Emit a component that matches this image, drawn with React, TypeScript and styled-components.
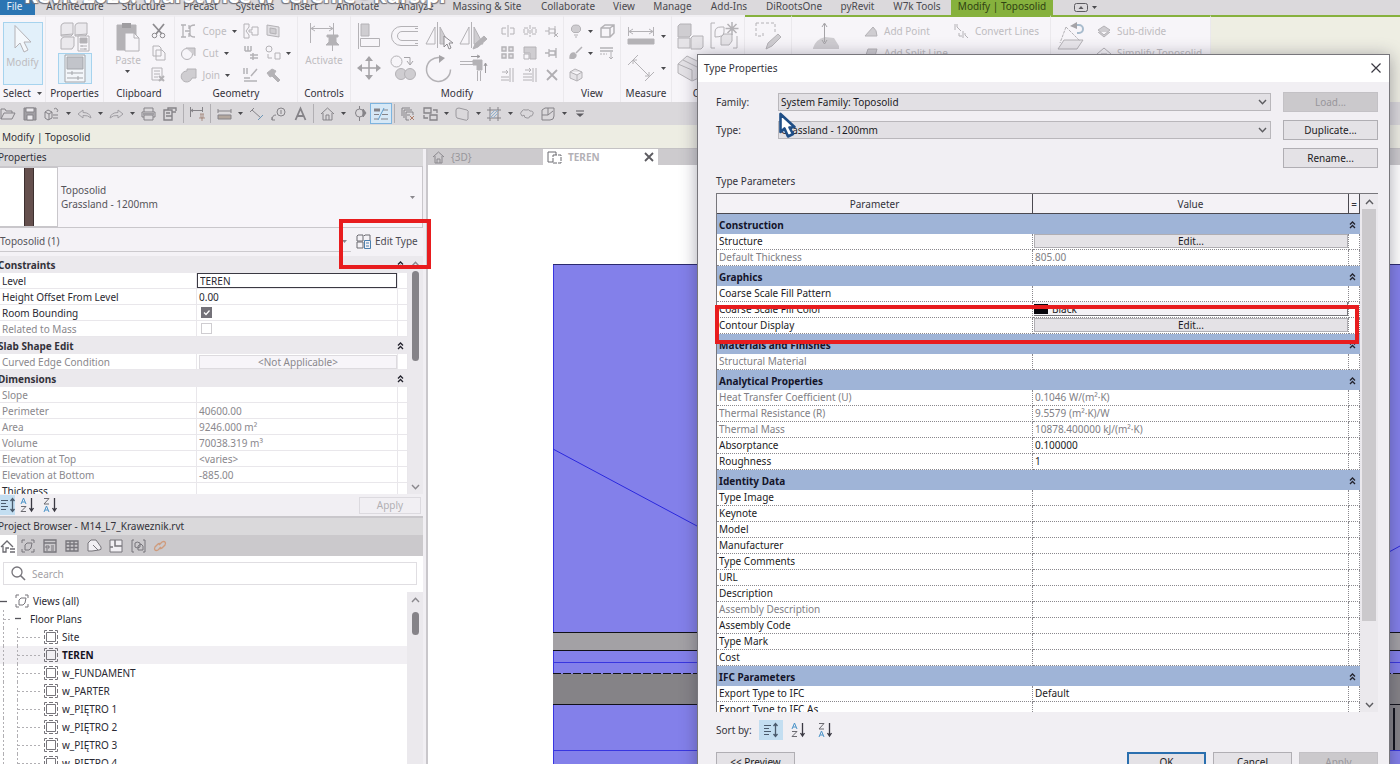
import React, { ReactNode } from "react";
import styled, { createGlobalStyle, css } from "styled-components";

const GlobalStyle = createGlobalStyle`
  * { box-sizing: border-box; }
  html, body { margin: 0; padding: 0; overflow: hidden; background: #fff; }
  body, button, input, select, table {
    font-family: "Noto Sans", "Open Sans", sans-serif;
    font-size: 10px;
    line-height: 16px;
    color: #33323a;
  }
  button, input, select { margin: 0; padding: 0; border: 0; background: none; border-radius: 0; }
  svg { display: block; flex: none; overflow: visible; }
`;

const Page = styled.div`
  position: relative;
  display: flex;
  flex-direction: column;
  height: 100vh;
  overflow: hidden;
  background: #fff;
`;

/* ---------- icons ---------- */

type DrawProps = { w: number; h: number; tone?: string; children: ReactNode };

const Drawing = ({ w, h, tone = "#b4b2b6", children }: DrawProps) => (
  <svg width={w} height={h} viewBox={`0 0 ${w} ${h}`} fill="none" stroke={tone} strokeWidth="1" aria-hidden="true">
    {children}
  </svg>
);

const Caret = ({ tone = "#4a4a4e" }: { tone?: string }) => (
  <svg width="5" height="3" viewBox="0 0 5 3" aria-hidden="true"><path d="M0 0h5L2.500 3z" fill={tone} /></svg>
);

const Chevrons = () => (
  <svg width="7" height="8" viewBox="0 0 7 8" fill="none" stroke="#22222c" strokeWidth="1.300" aria-hidden="true">
    <path d="M1 3.500L3.500 1 6 3.500M1 7L3.500 4.500 6 7" />
  </svg>
);

const Chevron = ({ up, tone = "#5c5c60" }: { up?: boolean; tone?: string }) => (
  <svg width="9" height="6" viewBox="0 0 9 6" fill="none" stroke={tone} strokeWidth="1.400" aria-hidden="true">
    <path d={up ? "M1 5L4.500 1.200 8 5" : "M1 1L4.500 4.800 8 1"} />
  </svg>
);

const G = "#b4b2b6";
const F = "#cfcdd1";

const big = {
  arrow: <Drawing w={20} h={30}><path d="M2 1.500V24l5-5 4 9 4-2-4-8h7z" fill="#f4f8fc" /></Drawing>,
  types: (
    <Drawing w={30} h={30}>
      <path d="M1 4q0-2 3-3h9v11l-2 2H1zM15 4q0-2 3-3h9v11l-2 2H15zM1 18q0-2 3-3h10v9l-2 3H1zM1 13l12-1M15 13l12-1" fill="#ebe9ed" />
      <path d="M18 14h11v15H18z" fill="#f7f5f9" /><path d="M20 16h7v5h-7z" fill={G} /><path d="M20 24h7M20 27h7M22 23v2M25 26v2" />
    </Drawing>
  ),
  palette: (
    <Drawing w={22} h={29} tone="#a3a5aa">
      <path d="M1 1h20v27H1z" fill="#f3f6fa" /><path d="M3 3h16v12H3z" fill="#c2c4ca" />
      <path d="M3 19h16M3 24h16M8 17v4M14 22v4" />
    </Drawing>
  ),
  paste: (
    <Drawing w={24} h={30}>
      <path d="M1 3h19v25H1z" fill={G} /><path d="M6 1h9v5H6z" fill="#9f9da1" stroke="none" />
      <path d="M9 11h9l5 5v13H9z" fill="#f7f5f9" /><path d="M18 11v5h5" />
    </Drawing>
  ),
  activate: (
    <Drawing w={30} h={30}>
      <path d="M1.500 1v20M24.500 1v12M2 6.500h22M6 4L2 6.500 6 9M20 4l4 2.500L20 9" />
      <path d="M18 13h11v2h-2v5l3 3H17l3-3v-5h-2zM23.500 23v6" fill={G} />
    </Drawing>
  ),
  align: <Drawing w={24} h={26}><path d="M1.500 0v26" /><path d="M4 1h8v12H4z" fill={F} /><path d="M3.500 15.500h19v8h-19z" /></Drawing>,
  offset: <Drawing w={30} h={24}><path d="M29 2.500H12a9.500 9.500 0 0 0 0 19h17M29 7.500H13a4.500 4.500 0 0 0 0 9h16M29 4.500h-3M29 19.500h-3" /></Drawing>,
  mirror: (
    <Drawing w={28} h={28}>
      <path d="M12.500 0v26" /><path d="M10 5v17H1z" /><path d="M15 5v17h9z" fill={F} />
      <path d="M19 14v11l3-3 2 5 2-1-2-5h4z" fill="#f7f5f9" stroke="#8e8c90" />
    </Drawing>
  ),
  mirrorDraw: (
    <Drawing w={30} h={28}>
      <path d="M12.500 0v26" /><path d="M10 5v17H1z" /><path d="M15 5v17h9z" fill={F} />
      <path d="M14 27l2-5 9-8 3 3-9 8z" fill={G} />
    </Drawing>
  ),
  move: (
    <Drawing w={24} h={24} tone="#a5a3a7">
      <path d="M12 3v18M3 12h18" strokeWidth="1.500" />
      <path d="M12 0l4 5H8zM12 24l4-5H8zM0 12l5-4v8zM24 12l-5-4v8z" fill="#a5a3a7" stroke="none" />
    </Drawing>
  ),
  copy: (
    <Drawing w={28} h={26}>
      <circle cx="6.500" cy="6.500" r="5.500" /><path d="M14 2.500h6v7M17 6l3 4 3-4" stroke="#a5a3a7" />
      <circle cx="11" cy="19" r="5.500" fill={F} /><circle cx="20" cy="19" r="5.500" fill={F} />
    </Drawing>
  ),
  rotate: <Drawing w={28} h={27}><path d="M15 2.500a12 12 0 1 0 10.500 12" strokeWidth="1.500" /><path d="M14 0l6 3-6 5z" fill="#a5a3a7" stroke="none" /></Drawing>,
  trim: (
    <Drawing w={28} h={27}>
      <path d="M0 6.500h13M0 9.500h13M17.500 16v10M20.500 16v10" /><path d="M13 5h9v10h-5v-5h-4z" fill={G} />
      <path d="M11 1.500h8M17 0l3 1.500L17 3M25.500 18V9M24 11l1.500-3L27 11" stroke="#9a989c" />
    </Drawing>
  ),
  ruler: <Drawing w={28} h={18}><path d="M1.500 0v9M26.500 0v9M2 4.500h24M6 2L2 4.500 6 7M22 2l4 2.500L22 7" /><path d="M1 12h26v5H1z" fill={G} /></Drawing>,
  dimension: <Drawing w={28} h={28}><path d="M1 11L11 1M18 27l9-9M6 6l16 16M6 10V6h4M22 18v4h-4" /></Drawing>,
  blocks: <Drawing w={27} h={27}><path d="M1 3l2-2h11v11l-2 2H1z" fill={F} /><path d="M1 15h12v10H1zM14 15l2-2h10v11l-2 2H14z" fill="#e5e3e7" /></Drawing>,
  bricks: <Drawing w={24} h={26}><path d="M1 9l9-8 14 7v14l-9 4L1 18zM1 9l14 6v10M6 5l14 7" fill="#e5e3e7" /></Drawing>,
  group: (
    <Drawing w={30} h={28}>
      <path d="M5 1H1v25h4M23 26h4V14" /><path d="M5 10q0-5 6-5h3v5q0 5-9 5z" /><path d="M11 15l3-3h8v7l-3 4h-8z" fill="#e5e3e7" />
      <path d="M22 0v13M15.500 6.500h13M17.500 2l9 9M26.500 2l-9 9" strokeWidth="1.500" />
    </Drawing>
  ),
  boundary: <Drawing w={27} h={28}><path d="M1 1h19v9M1 1v13h7v-4" strokeDasharray="3 2" /><path d="M11 27l2-6 10-9 3 3-9 9z" fill={F} /></Drawing>,
  shape: <Drawing w={28} h={28}><path d="M1 26q3-9 12-11l9 1 5 8v3H1z" fill={F} stroke="none" /><path d="M12.500 2v18M10 5l2.500-4L15 5M10 18l2.500 4 2.500-4" stroke="#a5a3a7" /></Drawing>,
  reset: (
    <Drawing w={29} h={28}>
      <path d="M7 18h19l-6 9H1z" fill="#e9e7eb" /><path d="M9 5L3 21M9 5l14 14" strokeDasharray="3 1" /><path d="M19 3h3a4 4 0 0 1 0 8h-2" stroke="#a8bccd" strokeWidth="2" />
      <path d="M20 0v7l-7-3z" fill="#a5a3a7" stroke="none" />
    </Drawing>
  ),
};

const small = {
  cut: <Drawing w={16} h={16} tone="#8e8c90"><path d="M2 1l9 10M13 1L5 11" strokeWidth="1.800" /><circle cx="3.500" cy="12.500" r="2.300" /><circle cx="11.500" cy="12.500" r="2.300" /></Drawing>,
  pages: <Drawing w={16} h={16}><path d="M2 1h6l2 2v8H2zM5 5h6l3 3v7H5z" fill="#f7f5f9" /></Drawing>,
  match: <Drawing w={16} h={16}><path d="M1 1h10v12H1zM3 4h6M3 7h6M3 10h4" /><path d="M8 9l5 5M13 9l-5 5" strokeWidth="2" /></Drawing>,
  cope: <Drawing w={16} h={16}><path d="M2 2v12M0 2h5M0 14h5M4 8h5M14 2q-5 0-5 3v6q0 3 5 3M8 2v4M8 10v4" strokeWidth="1.300" /></Drawing>,
  cutGeo: <Drawing w={16} h={16}><circle cx="6" cy="9" r="5.500" /><path d="M5 3h9v8" fill={F} /></Drawing>,
  join: <Drawing w={16} h={16}><path d="M6 2h9v9h-4a5.500 5.500 0 1 1-5-7z" fill={F} /></Drawing>,
  shrink: <Drawing w={16} h={16}><path d="M1 1h5v3L3 8l3 4v3H1zM9 4h6v8H9v-3H6V7h3z" /></Drawing>,
  wall: <Drawing w={16} h={16}><path d="M2 2l12 2v10L2 12z" fill="#e1dfe3" /><path d="M5 5l6 1v5L5 10z" fill={F} /></Drawing>,
  beam: <Drawing w={16} h={16}><path d="M2 1v5M5 1v5M8 1v5M2 6h6M7 10h8M7 13h8M10 8v7" strokeWidth="1.500" /></Drawing>,
  paint: <Drawing w={16} h={16}><circle cx="4" cy="4" r="3" /><path d="M3 9v4h4M10 8h5v6h-5z" /></Drawing>,
  demolish: <Drawing w={16} h={16}><path d="M1 1v6M4 1v6M1 14h13M1 11h6M8 9l6-7" strokeWidth="1.500" /></Drawing>,
  hammer: <Drawing w={16} h={16}><path d="M2 6l5-4 4 2-2 3 6 6-2 2-6-6-2 1z" fill={G} /></Drawing>,
  split: <Drawing w={14} h={12}><path d="M5 3H1v6h4M9 3h4v6H9M7 0v12" /></Drawing>,
  splitGap: <Drawing w={14} h={12}><path d="M5 3H1v6h4zM9 3h4v6H9zM7 0v12" strokeDasharray="4 1" /></Drawing>,
  unpin: <Drawing w={14} h={12}><path d="M0 6h4M4 2v8M4 4h6v4H4M10 1v10M9 8l4 4M13 8l-4 4" /></Drawing>,
  array: <Drawing w={14} h={14}><path d="M1 1h4v4H1zM8 1h4v4H8zM1 8h4v4H1zM8 8h4v4H8z" fill="#e1dfe3" strokeWidth="1.400" /></Drawing>,
  scale: <Drawing w={14} h={14}><path d="M1 1h12v12H7V7H1z" fill={F} /><path d="M1 8h5v5H1z" /></Drawing>,
  pin: <Drawing w={14} h={12}><path d="M0 6h4M4 2v8M4 4h6v4H4M11 1v10" strokeWidth="1.300" /></Drawing>,
  trimOne: <Drawing w={14} h={14}><path d="M12 0v14M9 0v14M0 9h8M0 12h8M1 4h6M5 2l2 2-2 2" /></Drawing>,
  trimMany: <Drawing w={14} h={14}><path d="M13 0v14M10 0v14M0 6h9M0 9h9M0 12h9M2 2h6M6 0l2 2-2 2" /></Drawing>,
  erase: <Drawing w={14} h={14} tone="#b0aeb2"><path d="M2 2l10 10M12 2L2 12" strokeWidth="1.800" /></Drawing>,
  bulb: <Drawing w={14} h={14}><path d="M7 1a4 4 0 0 1 2.500 7.500H4.500A4 4 0 0 1 7 1z" fill={F} /><path d="M5 11h4M6 13h2" /></Drawing>,
  cube: <Drawing w={16} h={16}><path d="M2 5l4-3h9v8l-4 4H2zM2 5h9v9M11 5l4-3" strokeWidth="1.500" /></Drawing>,
  brush: <Drawing w={14} h={14}><path d="M1 12q0-5 4-5l2 2q0 4-6 3zM7 7l6-6" fill={G} strokeWidth="1.500" /></Drawing>,
  lines: <Drawing w={16} h={14}><path d="M1 2h13M1 5h13" strokeWidth="1.500" /><path d="M1 8h7" strokeDasharray="2 1" /><path d="M12 6v7M10 11l2 2 2-2" /></Drawing>,
  box: <Drawing w={14} h={14}><path d="M1 4l5-3 7 3v6l-5 3-7-3zM1 4l7 3 5-3M8 7v6" fill="#e5e3e7" /></Drawing>,
  point: <Drawing w={16} h={14}><path d="M2 12h12q0-6-4-9z" fill={F} /></Drawing>,
  splitLine: <Drawing w={16} h={14}><path d="M2 12l3-9h9l-2 7-3 2z" fill={F} /></Drawing>,
  convert: <Drawing w={16} h={16}><path d="M1 1v6M3 1v3l4 4M5 10v3h3M9 8v7M11 10v2l3 3" /></Drawing>,
  subdivide: <Drawing w={16} h={14}><path d="M2 6l6-4 6 4-6 5zM2 8l6 5 6-5" fill={F} /></Drawing>,
  simplify: <Drawing w={16} h={14}><path d="M1 8l7-6 7 6-7 5zM5 8h6" /></Drawing>,
};

const Q = "#858388";
const quick: Record<string, ReactNode> = {
  open: <Drawing w={16} h={14} tone={Q}><path d="M1 12V2h4l1 2h6v2M1 12l3-6h11l-3 6z" /></Drawing>,
  save: <Drawing w={14} h={14} tone={Q}><path d="M1 1h12v12H1z" fill="#a09ea3" /><path d="M3 1h8v4H3zM4 8h6v5H4z" fill="#ebe9ed" /></Drawing>,
  sync: <Drawing w={16} h={14} tone={Q}><path d="M1 5l3-2 4 2v6l-4 2-3-2zM1 5l4 2 3-2M5 7v6M10 2a2 2 0 1 1 3 3M9 8h5M9 11h5" /></Drawing>,
  undo: <Drawing w={15} h={12} tone="#a19fa4"><path d="M1 6l5-4v2.500q7 0 8 5.500-3-3-8-2.500V10z" /></Drawing>,
  redo: <Drawing w={15} h={12} tone="#a19fa4"><path d="M14 6L9 2v2.500Q2 4.500 1 10q3-3 8-2.500V10z" /></Drawing>,
  print: <Drawing w={15} h={14} tone={Q}><path d="M3 5V1h9v4M3 10H1V5h13v5h-2M3 8h9v5H3z" /><path d="M2 6h11v2H2z" fill="#a09ea3" stroke="none" /></Drawing>,
  sheet: <Drawing w={14} h={14} tone={Q}><path d="M1 3h8v10H1zM3 6h4M3 9h6M5 3V1h8v3M9 5h4" strokeWidth="1.400" /></Drawing>,
  aligned: <Drawing w={16} h={14} tone={Q}><path d="M1.500 0v10M13.500 0v5M2 3.500h11M4 2L2 3.500 4 5" /><path d="M11 7h4M12 7v4h2V7M10 11h6M13 11v3" stroke="#a98f85" /></Drawing>,
  measure: <Drawing w={15} h={12} tone={Q}><path d="M1 1v4M14 1v4M1 3h13" /><path d="M1 7h13v4H1z" fill="#b3a79e" /></Drawing>,
  slope: <Drawing w={15} h={14} tone={Q}><path d="M1 5l4-4M3 3l9 8" /><path d="M9 13l5-5" stroke="#6d97b8" /></Drawing>,
  tag: <Drawing w={15} h={14} tone={Q}><circle cx="10" cy="5" r="4" /><path d="M10 3v4M1 13q0-5 4-5M1 10v3h3" /></Drawing>,
  text: <Drawing w={13} h={14} tone={Q}><path d="M1.500 13L6.500 1.500 11.500 13M3.500 9h6" strokeWidth="1.800" /></Drawing>,
  home: <Drawing w={15} h={14} tone={Q}><path d="M1 7l6.500-6L14 7M3 6v7h9V6M6 13V8h3v5" /></Drawing>,
  section: <Drawing w={13} h={15} tone={Q}><circle cx="6.500" cy="7" r="4" /><path d="M6.500 0v3M6.500 11v4" /><path d="M10 3l3 4-3 4z" fill={Q} /></Drawing>,
  thin: <Drawing w={16} h={14} tone={Q}><path d="M1 3h6" strokeWidth="3" /><path d="M10 3h5M1 7.500h5M9 7.500h6M1 12h4M8 12h7" /><path d="M5 13L11 1" stroke="#5f9bc9" /></Drawing>,
  close: <Drawing w={14} h={14} tone={Q}><path d="M1 9V1h8M3 11V3h8M5 5h7v3M5 5v8h3M6 8h3" /><path d="M9 9l4 4M13 9l-4 4" stroke="#b07f6b" /></Drawing>,
  swap: <Drawing w={15} h={14} tone={Q}><path d="M1 1h7v5H1zM7 8h7v5H7zM10 3h4v3M5 11H1V8" strokeWidth="1.300" /></Drawing>,
  solid: <Drawing w={15} h={14} tone="#9a989d"><path d="M1 3q0-2 3-2l8 2q2 1 1 3v6q-1 2-3 1l-8-2q-1-1-1-3z" /></Drawing>,
  hatch: <Drawing w={14} h={14} tone={Q}><path d="M3 0v14M11 0v14M0 3h14M0 11h14" /><path d="M3 8l5-5M3 11l8-8M6 11l5-5" stroke="#8fb2d0" /></Drawing>,
  cloud: <Drawing w={15} h={12} tone="#9a989d"><path d="M3 8q-3-3 0-5 1-2 4-1 3-1 4 1 4 0 3 3-1 3-3 2-1 3-3 2-3 0-3-3-1 1-2 1z" /></Drawing>,
  cubeBox: <Drawing w={14} h={14} tone={Q}><path d="M1 3l3-2h9v8q0 4-4 4H1zM1 8h6V1M7 8l5-4" /></Drawing>,
  more: <Drawing w={8} h={7} tone="#5c5b60"><path d="M0 1h8" /><path d="M0 3.500h8L4 7z" fill="#5c5b60" stroke="none" /></Drawing>,
};

/* ---------- tab strip ---------- */

const TabStrip = styled.nav`
  display: flex;
  flex: none;
  height: 15px;
  background: #dbd9dc;
  overflow: hidden;
`;

const RibbonTab = styled.a<{ $w: number; $kind?: "file" | "context" }>`
  flex: none;
  width: ${(p) => p.$w}px;
  height: 15px;
  line-height: 12px;
  text-align: center;
  white-space: nowrap;
  color: #4a494e;
  text-decoration: none;
  ${(p) => p.$kind === "file" && css`background: #2b75b3; color: #e6f0f8; padding-right: 6px;`}
  ${(p) => p.$kind === "context" && css`background: #86b13d; color: #2f4213;`}
`;

const StripEnd = styled.div`
  display: flex;
  gap: 4px;
  align-items: center;
  padding-left: 21px;
`;

const Caption = styled.div`
  position: absolute;
  top: -15px;
  left: 24px;
  font-size: 21px;
  font-weight: 700;
  line-height: 20px;
  white-space: nowrap;
  color: #fff;
  text-shadow: 1px 1px 1px #77757b, -1px 1px 1px #77757b;
  pointer-events: none;
`;

const tabs: [string, number, ("file" | "context")?][] = [
  ["File", 35, "file"], ["Architecture", 80], ["Structure", 57], ["Precast", 57], ["Systems", 52], ["Insert", 46],
  ["Annotate", 61], ["Analyze", 55], ["Massing & Site", 88], ["Collaborate", 74], ["View", 38], ["Manage", 59],
  ["Add-Ins", 54], ["DiRootsOne", 76], ["pyRevit", 51], ["W7k Tools", 68], ["Modify | Toposolid", 102, "context"],
];

/* ---------- ribbon ---------- */

const Ribbon = styled.div`
  display: flex;
  flex: none;
  height: 87px;
  background: #eeeee3;
  overflow: hidden;
`;

const Panel = styled.section<{ $w: number; $context?: boolean }>`
  display: flex;
  flex-direction: column;
  flex: none;
  width: ${(p) => p.$w}px;
  padding-top: 5px;
  background: #f7f5f9;
  border-right: 1px solid #ebe9ed;
  border-top: 2px solid ${(p) => (p.$context ? "#86b13d" : "#f1eff3")};
`;

const ContextFill = styled.div`
  flex: 1;
  border-top: 2px solid #86b13d;
`;

const PanelBody = styled.div<{ $lead?: number }>`
  display: flex;
  flex: 1;
  min-height: 0;
  justify-content: ${(p) => (p.$lead ? "flex-start" : "center")};
  gap: 6px;
  padding-left: ${(p) => p.$lead ?? 0}px;
  white-space: nowrap;
`;

const PanelTitle = styled.div`
  display: flex;
  flex: none;
  align-items: center;
  justify-content: center;
  gap: 6px;
  height: 18px;
`;

const Tool = styled.button<{ $active?: boolean; $w?: number }>`
  display: flex;
  flex-direction: column;
  align-items: center;
  width: ${(p) => (p.$w ? p.$w + "px" : "auto")};
  height: 63px;
  color: #bebcc0;
  ${(p) => p.$active && css`background: #e2f0fa; outline: 1px solid #a6d3ee; outline-offset: -1px; padding-top: 2px;`}
`;

const SmallActive = styled.span`
  display: flex;
  justify-content: center;
  width: 34px;
  height: 31px;
  margin-top: 1px;
  background: #e2f0fa;
  border: 1px solid #a6d3ee;
`;

const ToolLabel = styled.span`
  display: flex;
  flex-direction: column;
  align-items: center;
  gap: 2px;
`;

const Column = styled.div<{ $gap?: number; $lead?: number }>`
  display: flex;
  flex-direction: column;
  gap: ${(p) => p.$gap ?? 0}px;
  padding-left: ${(p) => p.$lead ?? 0}px;
`;

const ToolRow = styled.button`
  display: flex;
  flex: none;
  align-items: center;
  gap: 5px;
  height: 22px;
  padding-bottom: 4px;
  color: #bebcc0;
`;

const BigGrid = styled.div`
  display: grid;
  grid-template-columns: repeat(4, 35px);
  grid-auto-rows: 32px;
  justify-items: center;
`;

const SmallGrid = styled.div`
  display: grid;
  grid-template-columns: repeat(3, 22px);
  grid-auto-rows: 22px;
  justify-items: center;
  align-items: start;
`;

const Slot = styled.button<{ $h?: number }>`
  display: flex;
  flex: none;
  align-items: center;
  gap: 6px;
  height: ${(p) => p.$h ?? 18}px;
`;

const SlotRow = ({ icon, label, caret }: { icon: ReactNode; label?: string; caret?: boolean }) => (
  <ToolRow>{icon}{label && <span>{label}</span>}{caret && <Caret />}</ToolRow>
);

const RibbonArea = () => (
  <Ribbon>
    <Panel $w={46}>
      <PanelBody><Tool $active $w={40}>{big.arrow}<ToolLabel>Modify</ToolLabel></Tool></PanelBody>
      <PanelTitle>Select <Caret /></PanelTitle>
    </Panel>
    <Panel $w={58}>
      <PanelBody><Tool>{big.types}<SmallActive>{big.palette}</SmallActive></Tool></PanelBody>
      <PanelTitle>Properties</PanelTitle>
    </Panel>
    <Panel $w={71}>
      <PanelBody>
        <Tool $w={34}>{big.paste}<ToolLabel>Paste<Caret /></ToolLabel></Tool>
        <Column><SlotRow icon={small.cut} /><SlotRow icon={small.pages} /><SlotRow icon={small.match} /></Column>
      </PanelBody>
      <PanelTitle>Clipboard</PanelTitle>
    </Panel>
    <Panel $w={123}>
      <PanelBody>
        <Column>
          <SlotRow icon={small.cope} label="Cope" caret />
          <SlotRow icon={small.cutGeo} label="Cut" caret />
          <SlotRow icon={small.join} label="Join" caret />
        </Column>
        <Column><SlotRow icon={small.shrink} /><SlotRow icon={small.beam} /><SlotRow icon={small.demolish} /></Column>
        <Column><SlotRow icon={small.wall} /><SlotRow icon={small.paint} caret /><SlotRow icon={small.hammer} /></Column>
      </PanelBody>
      <PanelTitle>Geometry</PanelTitle>
    </Panel>
    <Panel $w={53}>
      <PanelBody><Tool>{big.activate}<ToolLabel>Activate</ToolLabel></Tool></PanelBody>
      <PanelTitle>Controls</PanelTitle>
    </Panel>
    <Panel $w={213}>
      <PanelBody>
        <BigGrid>
          {[big.align, big.offset, big.mirror, big.mirrorDraw, big.move, big.copy, big.rotate, big.trim].map((g, i) => (
            <Slot key={i} $h={28}>{g}</Slot>
          ))}
        </BigGrid>
        <SmallGrid>
          {[small.split, small.splitGap, small.unpin, small.array, small.scale, small.pin, small.trimOne, small.trimMany, small.erase].map((g, i) => (
            <Slot key={i}>{g}</Slot>
          ))}
        </SmallGrid>
      </PanelBody>
      <PanelTitle>Modify</PanelTitle>
    </Panel>
    <Panel $w={57}>
      <PanelBody>
        <Column><SlotRow icon={small.bulb} caret /><SlotRow icon={small.brush} caret /><SlotRow icon={small.box} /></Column>
        <Column><SlotRow icon={small.cube} /><SlotRow icon={small.lines} /></Column>
      </PanelBody>
      <PanelTitle>View</PanelTitle>
    </Panel>
    <Panel $w={51}>
      <PanelBody>
        <Column $gap={4}><Slot $h={28}>{big.ruler}<Caret /></Slot><Slot $h={28}>{big.dimension}<Caret /></Slot></Column>
      </PanelBody>
      <PanelTitle>Measure</PanelTitle>
    </Panel>
    <Panel $w={73}>
      <PanelBody>
        <Column $gap={4}><Slot $h={28}>{big.blocks}</Slot><Slot $h={28}>{big.bricks}</Slot></Column>
        <Column><Slot $h={28}>{big.group}</Slot></Column>
      </PanelBody>
      <PanelTitle>Create</PanelTitle>
    </Panel>
    <Panel $w={47} $context>
      <PanelBody><Slot $h={28}>{big.boundary}</Slot></PanelBody>
    </Panel>
    <Panel $w={259} $context>
      <PanelBody $lead={20}>
        <Slot $h={28}>{big.shape}</Slot>
        <Column $lead={17}><SlotRow icon={small.point} label="Add Point" /><SlotRow icon={small.splitLine} label="Add Split Line" /></Column>
        <Column><SlotRow icon={small.convert} label="Convert Lines" /></Column>
      </PanelBody>
    </Panel>
    <Panel $w={160} $context>
      <PanelBody $lead={6}>
        <Slot $h={28}>{big.reset}</Slot>
        <Column $lead={4}><SlotRow icon={small.subdivide} label="Sub-divide" /><SlotRow icon={small.simplify} label="Simplify Toposolid" /></Column>
      </PanelBody>
    </Panel>
    <ContextFill />
  </Ribbon>
);

/* ---------- quick access and options bars ---------- */

const QuickBar = styled.div`
  display: flex;
  flex: none;
  align-items: center;
  height: 23px;
  margin-left: -3px;
  background: #dad8db;
`;

const QuickButton = styled.button<{ $active?: boolean; $narrow?: boolean }>`
  display: flex;
  align-items: center;
  justify-content: center;
  flex: none;
  width: ${(p) => (p.$narrow ? 10 : 22)}px;
  height: 21px;
  ${(p) => p.$active && css`background: #d6e8f6; outline: 1px solid #7db4df; outline-offset: -1px;`}
`;

const QuickRule = styled.span`
  width: 1px;
  height: 19px;
  margin: 0 2px;
  background: #b1afb3;
`;

const quickOrder = [
  "open", "save", "sync", "v", "undo", "v", "redo", "v", "print", "sheet", "|", "aligned", "|", "measure", "v", "slope", "tag",
  "text", "|", "home", "v", "section", "thin", "|", "close", "swap", "v", "solid", "v", "hatch", "v", "cloud", "cubeBox", "v", "more",
];

const OptionsBar = styled.div`
  flex: none;
  height: 24px;
  padding: 0 2px;
  line-height: 24px;
  background: #edede3;
  border-bottom: 1px solid #c4c2c4;
`;

/* ---------- workspace ---------- */

const Workspace = styled.div`
  display: flex;
  flex: 1;
  min-height: 0;
`;

const Sidebar = styled.aside`
  display: flex;
  flex-direction: column;
  flex: none;
  width: 428px;
  padding-right: 3px;
  background: #f1eff3;
  border-right: 2px solid #c9c7cb;
`;

const DockTitle = styled.h2`
  margin: 0;
  flex: none;
  height: 17px;
  font-size: 10px;
  font-weight: 400;
  line-height: 17px;
  text-indent: -2px;
  background: #dad9db;
`;

const TypePicker = styled.div`
  display: flex;
  flex: none;
  align-items: center;
  height: 62px;
  padding-right: 7px;
  background: #f7f5f9;
  border: 1px solid #c9c7cb;
  border-left: 0;
`;

const Thumb = styled.div`
  display: flex;
  justify-content: center;
  width: 58px;
  height: 60px;
  background: #fff;
  border: 1px solid #c9c7cb;
  border-left: 0;
  &::after { content: ""; width: 8px; background: #65504e; border: 1px solid #3d3030; border-width: 0 1px; }
`;

const TypeText = styled.div`
  flex: 1;
  padding-left: 3px;
  line-height: 14px;
  color: #55545a;
`;

const InstanceRow = styled.div`
  display: flex;
  flex: none;
  height: 28px;
  background: #f4f2f6;
`;

const InstanceSelect = styled.div`
  display: flex;
  align-items: center;
  justify-content: space-between;
  width: 351px;
  height: 24px;
  padding: 3px 4px 0 0;
  color: #55545a;
  border-bottom: 1px solid #cbc9cd;
`;

const EditTypeFrame = styled.div`
  position: relative;
  display: flex;
  flex: 1;
`;

const Highlight = styled.div<{ $t: number; $l: number; $r: number; $h: number }>`
  position: absolute;
  top: ${(p) => p.$t}px;
  left: ${(p) => p.$l}px;
  right: ${(p) => p.$r}px;
  height: ${(p) => p.$h}px;
  border: 4px solid #e81c1e;
  z-index: 2;
  pointer-events: none;
`;

const EditTypeButton = styled.button`
  display: flex;
  align-items: center;
  gap: 4px;
  height: 26px;
  padding-left: 5px;
  color: #4c4b52;
`;

const GridArea = styled.div`
  display: flex;
  flex: none;
  height: 238px;
  overflow: hidden;
`;

const PropTable = styled.table`
  flex: 1;
  table-layout: fixed;
  border-collapse: separate;
  border-spacing: 0;
  align-self: flex-start;
  background: #fff;
`;

const PropGroup = styled.th`
  height: 17px;
  padding: 0 4px 0 0;
  line-height: 16px;
  text-align: left;
  text-indent: -2px;
  font-weight: 700;
  background: #ebe9ed;
`;

const GroupLine = styled.span`
  display: flex;
  align-items: center;
  justify-content: space-between;
`;

const PropCell = styled.td<{ $dim?: boolean }>`
  height: 16px;
  padding: 0 0 0 2px;
  line-height: 14px;
  white-space: nowrap;
  color: ${(p) => (p.$dim ? "#8a888d" : "#2a2932")};
  border-bottom: 1px solid #e9e7eb;
  border-right: 1px solid #e9e7eb;
`;

const LevelInput = styled.input`
  display: block;
  width: 200px;
  height: 15px;
  margin-left: -2px;
  padding: 0 2px;
  line-height: 13px;
  color: #2a2932;
  border: 1px solid #3a3942;
`;

const Tick = styled.input`
  appearance: none;
  display: block;
  width: 11px;
  height: 11px;
  margin: 0 0 0 2px;
  border: 1px solid #cfcdd1;
  &:checked {
    border-color: #747279;
    background: #747279 url("data:image/svg+xml,%3Csvg xmlns='http://www.w3.org/2000/svg' viewBox='0 0 9 9'%3E%3Cpath d='M2 4.500l2 2 3.500-4' fill='none' stroke='white' stroke-width='1.300'/%3E%3C/svg%3E");
  }
`;

const NotApplicable = styled.button`
  display: block;
  width: 198px;
  height: 14px;
  line-height: 12px;
  color: #8a888d;
  background: #f7f5f9;
  border: 1px solid #dddbdf;
`;

const ScrollTrack = styled.div<{ $w: number }>`
  display: flex;
  flex-direction: column;
  align-items: center;
  flex: none;
  width: ${(p) => p.$w}px;
  background: #ebe9ed;
`;

const ScrollArrow = styled.button`
  display: flex;
  align-items: center;
  justify-content: center;
  flex: none;
  width: 100%;
  height: 15px;
`;

const ScrollThumb = styled.div<{ $h: number; $w: number; $tone: string; $round?: boolean }>`
  flex: none;
  width: ${(p) => p.$w}px;
  height: ${(p) => p.$h}px;
  background: ${(p) => p.$tone};
  border-radius: ${(p) => (p.$round ? 4 : 0)}px;
`;

const Spring = styled.span`
  flex: 1;
`;

const PanelFoot = styled.div`
  display: flex;
  flex: none;
  align-items: center;
  height: 24px;
  padding-right: 2px;
  border-bottom: 2px solid #c9c7cb;
`;

const SortButton = styled.button<{ $active?: boolean; $w: number }>`
  display: flex;
  align-items: center;
  justify-content: center;
  width: ${(p) => p.$w}px;
  height: 20px;
  background: ${(p) => (p.$active ? "#c3def1" : "transparent")};
`;

const PaleButton = styled.button`
  width: 62px;
  height: 17px;
  line-height: 15px;
  color: #b1afb3;
  border: 1px solid #dcdadf;
`;

const BrowserTabs = styled.div`
  display: flex;
  flex: none;
  height: 21px;
  background: #cbc9cc;
`;

const BrowserTab = styled.button<{ $active?: boolean }>`
  display: flex;
  align-items: center;
  justify-content: center;
  flex: none;
  width: ${(p) => (p.$active ? 17 : 22)}px;
  background: ${(p) => (p.$active ? "#fff" : "transparent")};
`;

const BrowserBody = styled.div`
  display: flex;
  flex-direction: column;
  flex: 1;
  min-height: 0;
  padding-top: 6px;
  background: #fff;
`;

const SearchBox = styled.label`
  display: flex;
  flex: none;
  align-items: center;
  gap: 6px;
  height: 23px;
  margin: 0 6px 7px 3px;
  padding-left: 7px;
  border: 1px solid #e0dee2;
`;

const SearchInput = styled.input`
  flex: 1;
  outline: 0;
  &::placeholder { color: #a3a1a6; opacity: 1; }
`;

const TreeArea = styled.div`
  display: flex;
  flex: 1;
  min-height: 0;
  overflow: hidden;
`;

const Tree = styled.ul`
  flex: 1;
  margin: 0;
  padding: 0;
  list-style: none;
  color: #2a2932;
`;

const TreeItem = styled.li<{ $selected?: boolean }>`
  display: flex;
  align-items: center;
  height: 18px;
  ${(p) => p.$selected && css`background: #f1eff3; font-weight: 700; color: #14131f;`}
`;

const TreeName = styled.span`
  padding-left: 4px;
`;

const ThumbGap = styled.span`
  height: 5px;
`;

/* ---------- canvas ---------- */

const CanvasArea = styled.main`
  display: flex;
  flex-direction: column;
  flex: 1;
  min-width: 0;
  background: #fff;
`;

const ViewTabs = styled.div`
  display: flex;
  flex: none;
  height: 16px;
  background: #cdcbce;
`;

const ViewTab = styled.button<{ $active?: boolean }>`
  display: flex;
  align-items: center;
  gap: 6px;
  width: 115px;
  padding: 0 4px;
  line-height: 16px;
  color: ${(p) => (p.$active ? "#b3b1b6" : "#98969b")};
  font-weight: ${(p) => (p.$active ? 700 : 400)};
  background: ${(p) => (p.$active ? "#fff" : "transparent")};
`;

const Plan = styled.svg`
  flex: 1;
  width: 100%;
  min-height: 0;
`;

/* ---------- dialog ---------- */

const Dialog = styled.section`
  position: absolute;
  top: 54px;
  left: 697px;
  right: 10px;
  background: #f1eff3;
  border: 1px solid #77767b;
  box-shadow: 0 2px 16px rgba(40, 38, 60, 0.4);
`;

const DialogBar = styled.header`
  display: flex;
  align-items: center;
  justify-content: space-between;
  height: 27px;
  padding: 0 7px 1px 6px;
  background: #fff;
`;

const DialogBody = styled.div`
  display: flex;
  flex-direction: column;
  padding: 10px 11px 10px 18px;
`;

const FieldGrid = styled.div`
  display: grid;
  grid-template-columns: 50px minmax(0, 1fr) 95px;
  grid-auto-rows: 20px;
  row-gap: 8px;
  column-gap: 12px;
  align-items: center;
`;

const DropWrap = styled.div`
  display: grid;
  align-items: center;
  justify-items: end;
  grid-template-columns: 1fr;
  & > * { grid-area: 1 / 1; }
  & > svg { margin-right: 4px; pointer-events: none; }
`;

const Drop = styled.select`
  appearance: none;
  width: 100%;
  height: 18px;
  padding: 0 2px;
  line-height: 14px;
  color: #1c1b24;
  background: #e2e0e4;
  border: 1px solid #b9b7bb;
`;

const DialogButton = styled.button<{ $w: number; $look?: "primary" | "off" }>`
  width: ${(p) => p.$w}px;
  height: 20px;
  line-height: 18px;
  color: ${(p) => (p.$look === "off" ? "#98969b" : "#1c1b24")};
  background: ${(p) => (p.$look === "off" ? "#cbc9cc" : "#e4e2e6")};
  border: 1px solid ${(p) => (p.$look === "off" ? "#c3c1c5" : "#b0aeb3")};
  ${(p) => p.$look === "primary" && css`border: 2px solid #2a6fae; line-height: 16px;`}
`;

const ParamsTitle = styled.div`
  height: 17px;
  margin: 5px 0 3px;
`;

const ParamsBox = styled.div`
  position: relative;
  display: flex;
  height: 519px;
  border-top: 1px solid #77767b;
  border-left: 1px solid #77767b;
`;

const ParamsClip = styled.div`
  flex: 1;
  overflow: hidden;
  background: #fff;
`;

const ParamsTable = styled.table`
  width: 100%;
  table-layout: fixed;
  border-collapse: separate;
  border-spacing: 0;
`;

const HeadCell = styled.th`
  height: 20px;
  padding: 0;
  font-weight: 400;
  line-height: 18px;
  background: #f4f2f6;
  border-right: 1px solid #4a4950;
  border-bottom: 1px solid #4a4950;
`;

const ParamGroup = styled.th`
  height: 20px;
  padding: 1px 4px 0 2px;
  text-align: left;
  font-weight: 700;
  color: #14142a;
  background: #9fb4d7;
`;

const ParamCell = styled.td<{ $dim?: boolean }>`
  height: 16px;
  padding: 0 0 1px 2px;
  line-height: 14px;
  white-space: nowrap;
  color: ${(p) => (p.$dim ? "#807e84" : "#1c1b24")};
  border-right: 1px dotted #8a888d;
  border-bottom: 1px dotted #8a888d;
`;

const EditCell = styled.button`
  display: block;
  width: calc(100% + 1px);
  height: 14px;
  margin-left: -1px;
  line-height: 12px;
  color: #1c1b24;
  background: #e4e2e6;
  border: 1px solid #b0aeb3;
`;

const ColorCell = styled.button`
  display: flex;
  align-items: center;
  gap: 4px;
  width: calc(100% + 1px);
  height: 14px;
  margin-left: -1px;
  color: #1c1b24;
  background: #f4f2f6;
  border: 1px solid #77767b;
  border-width: 0 1px 1px 0;
  &::before { content: ""; width: 14px; height: 10px; background: #07060c; }
`;

const SortLine = styled.div`
  display: flex;
  align-items: center;
  gap: 3px;
  height: 35px;
  & > span { width: 40px; }
`;

const Actions = styled.footer`
  display: flex;
  align-items: center;
  gap: 7px;
  margin-top: 5px;
`;

const PointerMark = styled.svg`
  position: absolute;
  top: 112px;
  left: 778px;
`;

/* ---------- data ---------- */

type Row = { name: string; value?: string; dim?: boolean; kind?: "edit" | "color" | "input" | "on" | "off" | "na" };
type Group = { title: string; rows: Row[] };

const instanceGroups: Group[] = [
  { title: "Constraints", rows: [
    { name: "Level", value: "TEREN", kind: "input" },
    { name: "Height Offset From Level", value: "0.00" },
    { name: "Room Bounding", kind: "on" },
    { name: "Related to Mass", kind: "off", dim: true },
  ] },
  { title: "Slab Shape Edit", rows: [{ name: "Curved Edge Condition", value: "<Not Applicable>", kind: "na", dim: true }] },
  { title: "Dimensions", rows: [
    { name: "Slope", dim: true },
    { name: "Perimeter", value: "40600.00", dim: true },
    { name: "Area", value: "9246.000 m²", dim: true },
    { name: "Volume", value: "70038.319 m³", dim: true },
    { name: "Elevation at Top", value: "<varies>", dim: true },
    { name: "Elevation at Bottom", value: "-885.00", dim: true },
    { name: "Thickness" },
  ] },
];

const typeGroups: Group[] = [
  { title: "Construction", rows: [{ name: "Structure", kind: "edit" }, { name: "Default Thickness", value: "805.00", dim: true }] },
  { title: "Graphics", rows: [
    { name: "Coarse Scale Fill Pattern" },
    { name: "Coarse Scale Fill Color", value: "Black", kind: "color" },
    { name: "Contour Display", kind: "edit" },
  ] },
  { title: "Materials and Finishes", rows: [{ name: "Structural Material", dim: true }] },
  { title: "Analytical Properties", rows: [
    { name: "Heat Transfer Coefficient (U)", value: "0.1046 W/(m²·K)", dim: true },
    { name: "Thermal Resistance (R)", value: "9.5579 (m²·K)/W", dim: true },
    { name: "Thermal Mass", value: "10878.400000 kJ/(m²·K)", dim: true },
    { name: "Absorptance", value: "0.100000" },
    { name: "Roughness", value: "1" },
  ] },
  { title: "Identity Data", rows: [
    { name: "Type Image" }, { name: "Keynote" }, { name: "Model" }, { name: "Manufacturer" }, { name: "Type Comments" },
    { name: "URL" }, { name: "Description" }, { name: "Assembly Description", dim: true }, { name: "Assembly Code" },
    { name: "Type Mark" }, { name: "Cost" },
  ] },
  { title: "IFC Parameters", rows: [{ name: "Export Type to IFC", value: "Default" }, { name: "Export Type to IFC As" }] },
];

const floorPlans = ["Site", "TEREN", "w_FUNDAMENT", "w_PARTER", "w_PIĘTRO 1", "w_PIĘTRO 2", "w_PIĘTRO 3", "w_PIĘTRO 4"];

/* ---------- pieces ---------- */

const SortGroup = () => (
  <Drawing w={14} h={14} tone="#4a5a6c"><path d="M0 2.500h7M0 5.500h5M0 8.500h7M0 11.500h5" /><path d="M11.500 1v12M9.500 3l2-2.500 2 2.500M9.500 11l2 2.500 2-2.500" strokeWidth="1.300" /></Drawing>
);

const SortLetters = ({ down }: { down?: boolean }) => (
  <Drawing w={14} h={16} tone="#6b6a70">
    <path d={down ? "M1 15l2.500-6L6 15M2 13h3" : "M1 7l2.500-6L6 7M2 5h3"} stroke="#4a93c8" />
    <path d={down ? "M1 1.500h5l-5 5.500h5" : "M1 9.500h5l-5 5h5"} />
    <path d="M11.500 1v12M9.500 11l2 3 2-3" stroke="#3a3942" strokeWidth="1.300" />
  </Drawing>
);

const PlanGlyph = () => (
  <Drawing w={14} h={14} tone="#77757b"><path d="M2.500 2.500h9v9h-9z" /><path d="M.5 3V.5H3M5 .5h4M11 .5h2.500V3M13.500 5v4M13.500 11v2.500H11M9 13.500H5M3 13.500H.5V11M.5 9V5" /></Drawing>
);

const ViewsGlyph = () => (
  <Drawing w={14} h={14} tone="#77757b"><path d="M1 4V1h3M10 1h3v3M13 10v3h-3M4 13H1v-3M4 6l2-2h5l-1 5-2 2H4z" /></Drawing>
);

const InstanceValue = ({ row }: { row: Row }) => {
  if (row.kind === "input") return <LevelInput aria-label={row.name} defaultValue={row.value} />;
  if (row.kind === "on") return <Tick type="checkbox" aria-label={row.name} defaultChecked />;
  if (row.kind === "off") return <Tick type="checkbox" aria-label={row.name} />;
  if (row.kind === "na") return <NotApplicable>{row.value}</NotApplicable>;
  return <>{row.value}</>;
};

const TypeValue = ({ row }: { row: Row }) => {
  if (row.kind === "edit") return <EditCell>Edit...</EditCell>;
  if (row.kind === "color") return <ColorCell>{row.value}</ColorCell>;
  return <>{row.value}</>;
};

const PropertiesDock = () => (
  <>
    <DockTitle>Properties</DockTitle>
    <TypePicker>
      <Thumb />
      <TypeText>Toposolid<br />Grassland - 1200mm</TypeText>
      <Caret tone="#8a888d" />
    </TypePicker>
    <InstanceRow>
      <InstanceSelect>Toposolid (1)<Caret tone="#8a888d" /></InstanceSelect>
      <EditTypeFrame>
        <EditTypeButton>
          <Drawing w={15} h={15} tone="#6b6a70">
            <path d="M1 2l1-1h5v6H1zM8 2l1-1h5v5M1 8h6v6H1z" /><path d="M8.500 6.500h6v8h-6z" fill="#f4f2f6" stroke="#4a7fae" /><path d="M10 9h3M10 12h3" stroke="#4a7fae" />
          </Drawing>
          Edit Type
        </EditTypeButton>
        <Highlight $t={-9} $l={-12} $r={-8} $h={50} />
      </EditTypeFrame>
    </InstanceRow>
    <GridArea>
      <PropTable>
        <colgroup><col style={{ width: 197 }} /><col style={{ width: 200 }} /><col /></colgroup>
        <tbody>
          {instanceGroups.map((g) => (
            <React.Fragment key={g.title}>
              <tr><PropGroup colSpan={3}><GroupLine>{g.title}<Chevrons /></GroupLine></PropGroup></tr>
              {g.rows.map((r) => (
                <tr key={r.name}>
                  <PropCell $dim={r.dim}>{r.name}</PropCell>
                  <PropCell $dim={r.dim}><InstanceValue row={r} /></PropCell>
                  <PropCell />
                </tr>
              ))}
            </React.Fragment>
          ))}
        </tbody>
      </PropTable>
      <ScrollTrack $w={15}>
        <ScrollArrow aria-label="Scroll up"><Chevron up tone="#8a888d" /></ScrollArrow>
        <ScrollThumb $h={90} $w={7} $tone="#858388" $round />
        <Spring />
        <ScrollArrow aria-label="Scroll down"><Chevron tone="#8a888d" /></ScrollArrow>
      </ScrollTrack>
    </GridArea>
    <PanelFoot>
      <SortButton $active $w={15} aria-label="Group by category"><SortGroup /></SortButton>
      <SortButton $w={24} aria-label="Sort ascending"><SortLetters /></SortButton>
      <SortButton $w={22} aria-label="Sort descending"><SortLetters down /></SortButton>
      <Spring />
      <PaleButton disabled>Apply</PaleButton>
    </PanelFoot>
  </>
);

const BrowserDock = () => (
  <>
    <DockTitle>Project Browser - M14_L7_Kraweznik.rvt</DockTitle>
    <BrowserTabs>
      <BrowserTab $active aria-label="Home"><Drawing w={15} h={14} tone="#6b6a70"><path d="M0 8l6-6 6 6M2 7v6h3V9h3M9 10h5M9 13h5" strokeWidth="1.300" /></Drawing></BrowserTab>
      <BrowserTab aria-label="Views"><ViewsGlyph /></BrowserTab>
      <BrowserTab aria-label="Legends"><Drawing w={14} h={14} tone="#77757b"><path d="M1 1h12v12H1zM1 4h12" strokeWidth="1.300" /><path d="M3 7h3v2H3zM3 11h2M8 7h3M8 9h3M8 11h3" /></Drawing></BrowserTab>
      <BrowserTab aria-label="Schedules"><Drawing w={14} h={12} tone="#77757b"><path d="M1 1h12v10H1zM1 4h12M1 7.500h12M5 1v10M9 1v10" strokeWidth="1.300" /></Drawing></BrowserTab>
      <BrowserTab aria-label="Sheets"><Drawing w={15} h={13} tone="#77757b"><path d="M5 12H1V4l3-3h5l5 7q1 3-2 3zM6 6l5 5" fill="#f1eff3" /></Drawing></BrowserTab>
      <BrowserTab aria-label="Families"><Drawing w={14} h={14} tone="#77757b"><path d="M1 1h12v12H1z" fill="#f1eff3" /><path d="M6 1v6h7M1 8h3" strokeWidth="1.500" /></Drawing></BrowserTab>
      <BrowserTab aria-label="Groups"><Drawing w={15} h={14} tone="#77757b"><path d="M3 1H1v12h2M12 1h2v12h-2M4 4q2-2 5 0v4q-3 2-5 0zM7 7l3-2 2 2v4H7z" /></Drawing></BrowserTab>
      <BrowserTab aria-label="Links"><Drawing w={14} h={12} tone="#cf9b7c"><path d="M6 5l3-3q2-1 3 0t0 3L9 8Q8 9 6 8M8 7L5 10q-2 1-3 0t0-3l3-3q1-1 3 0" strokeWidth="1.300" /></Drawing></BrowserTab>
    </BrowserTabs>
    <BrowserBody>
      <SearchBox>
        <Drawing w={15} h={15} tone="#77757b"><circle cx="6" cy="6" r="5" strokeWidth="1.300" /><path d="M9.500 9.500L14 14" strokeWidth="1.600" /></Drawing>
        <SearchInput placeholder="Search" aria-label="Search" />
      </SearchBox>
      <TreeArea>
        <Tree>
          <TreeItem>
            <svg width="15" height="18"><path d="M0 9.500h7" stroke="#55545a" strokeWidth="1.300" /></svg>
            <ViewsGlyph /><TreeName>Views (all)</TreeName>
          </TreeItem>
          <TreeItem>
            <svg width="26" height="18" fill="none" stroke="#b1afb3">
              <path d="M3.500 0v18M4 9.500h7" strokeDasharray="2 2" /><path d="M15 8.500h6" stroke="#55545a" strokeWidth="1.300" />
            </svg>
            <TreeName>Floor Plans</TreeName>
          </TreeItem>
          {floorPlans.map((n) => (
            <TreeItem key={n} $selected={n === "TEREN"}>
              <svg width="44" height="18" fill="none" stroke="#b1afb3">
                <path d="M3.500 0v18M17.500 0v18M18 9.500h22" strokeDasharray="2 2" />
              </svg>
              <PlanGlyph /><TreeName>{n}</TreeName>
            </TreeItem>
          ))}
        </Tree>
        <ScrollTrack $w={16}>
          <ScrollArrow aria-label="Scroll up"><Chevron up tone="#8a888d" /></ScrollArrow>
          <ThumbGap />
          <ScrollThumb $h={23} $w={7} $tone="#858388" $round />
        </ScrollTrack>
      </TreeArea>
    </BrowserBody>
  </>
);

const SitePlan = () => (
  <Plan aria-label="Site plan" shapeRendering="crispEdges">
    <svg x="125" y="0" width="100%" height="100%">
      <rect y="100" width="100%" height="600" fill="#8380ea" />
      <path d="M0 99.500h2000" stroke="#2b2a6e" />
      <path d="M.5 100v600M0 497h2000M0 585.500h2000" stroke="#3836e0" />
      <rect y="467" width="100%" height="19" fill="#a3a1a5" />
      <rect y="509" width="100%" height="30" fill="#858387" />
      <path d="M0 467.500h2000M0 485.500h2000M0 539.500h2000" stroke="#101018" />
      <path d="M0 508.500h2000" stroke="#101018" strokeDasharray="8 2" />
      <path d="M0 284l144 77" stroke="#2a28dd" shapeRendering="auto" />
    </svg>
    <svg x="100%" overflow="visible">
      <rect x="-11" y="540" width="11" height="45" fill="#858387" />
      <path d="M-6.500 543v42" stroke="#101018" strokeWidth="2" />
      <path d="M-11 387l11-6" stroke="#2a28dd" shapeRendering="auto" />
    </svg>
  </Plan>
);

const TypeDialog = () => (
  <Dialog role="dialog" aria-label="Type Properties">
    <DialogBar>
      <span>Type Properties</span>
      <button aria-label="Close"><Drawing w={12} h={12} tone="#3a3942"><path d="M1.500 1.500l9 9M10.500 1.500l-9 9" strokeWidth="1.200" /></Drawing></button>
    </DialogBar>
    <DialogBody>
      <FieldGrid>
        <label htmlFor="family">Family:</label>
        <DropWrap><Drop id="family"><option>System Family: Toposolid</option></Drop><Chevron /></DropWrap>
        <DialogButton $w={95} $look="off" disabled>Load...</DialogButton>
        <label htmlFor="type">Type:</label>
        <DropWrap><Drop id="type"><option>Grassland - 1200mm</option></Drop><Chevron /></DropWrap>
        <DialogButton $w={95}>Duplicate...</DialogButton>
        <span /><span />
        <DialogButton $w={95}>Rename...</DialogButton>
      </FieldGrid>
      <ParamsTitle>Type Parameters</ParamsTitle>
      <ParamsBox>
        <ParamsClip>
          <ParamsTable>
            <colgroup><col /><col /><col style={{ width: 11 }} /></colgroup>
            <thead><tr><HeadCell>Parameter</HeadCell><HeadCell>Value</HeadCell><HeadCell>=</HeadCell></tr></thead>
            <tbody>
              {typeGroups.map((g) => (
                <React.Fragment key={g.title}>
                  <tr><ParamGroup colSpan={3}><GroupLine>{g.title}<Chevrons /></GroupLine></ParamGroup></tr>
                  {g.rows.map((r) => (
                    <tr key={r.name}>
                      <ParamCell $dim={r.dim}>{r.name}</ParamCell>
                      <ParamCell $dim={r.dim}><TypeValue row={r} /></ParamCell>
                      <ParamCell />
                    </tr>
                  ))}
                </React.Fragment>
              ))}
            </tbody>
          </ParamsTable>
        </ParamsClip>
        <ScrollTrack $w={18}>
          <ScrollArrow aria-label="Scroll up"><Chevron up /></ScrollArrow>
          <ScrollThumb $h={412} $w={14} $tone="#cbc9cc" />
          <Spring />
          <ScrollArrow aria-label="Scroll down"><Chevron /></ScrollArrow>
        </ScrollTrack>
        <Highlight $t={111} $l={-2} $r={19} $h={39} />
      </ParamsBox>
      <SortLine>
        <span>Sort by:</span>
        <SortButton $active $w={24} aria-label="Group by category"><SortGroup /></SortButton>
        <SortButton $w={24} aria-label="Sort ascending"><SortLetters /></SortButton>
        <SortButton $w={24} aria-label="Sort descending"><SortLetters down /></SortButton>
      </SortLine>
      <Actions>
        <DialogButton $w={79}>&lt;&lt; Preview</DialogButton>
        <Spring />
        <DialogButton $w={79} $look="primary">OK</DialogButton>
        <DialogButton $w={79}>Cancel</DialogButton>
        <DialogButton $w={79} $look="off" disabled>Apply</DialogButton>
      </Actions>
    </DialogBody>
  </Dialog>
);

export default function App() {
  return (
    <Page>
      <GlobalStyle />
      <TabStrip>
        {tabs.map(([label, w, kind]) => <RibbonTab key={label} href="#" $w={w} $kind={kind}>{label}</RibbonTab>)}
        <StripEnd>
          <Drawing w={14} h={9} tone="#5c5b60"><rect x=".5" y=".5" width="13" height="8" rx="2" /><path d="M4.500 6h5L7 3z" fill="#5c5b60" stroke="none" /></Drawing>
          <Caret />
        </StripEnd>
      </TabStrip>
      <RibbonArea />
      <QuickBar>
        {quickOrder.map((k, i) =>
          k === "|" ? <QuickRule key={i} /> :
          k === "v" ? <QuickButton key={i} $narrow aria-label="More options"><Caret /></QuickButton> :
          <QuickButton key={i} $active={k === "thin"} aria-label={k}>{quick[k]}</QuickButton>
        )}
      </QuickBar>
      <OptionsBar>Modify | Toposolid</OptionsBar>
      <Workspace>
        <Sidebar><PropertiesDock /><BrowserDock /></Sidebar>
        <CanvasArea>
          <ViewTabs>
            <ViewTab><Drawing w={13} h={13} tone="#8a888d"><path d="M1 6l5.500-5L12 6M3 5v7h7V5M5 12V8h3v4" /></Drawing>{"{3D}"}</ViewTab>
            <ViewTab $active>
              <Drawing w={15} h={13} tone="#6b6a70"><path d="M1 1h8v10H1z" /><path d="M6 4h8v8H6z" fill="#fff" strokeDasharray="4 1" /></Drawing>
              TEREN<Spring />
              <Drawing w={10} h={10} tone="#5c5b60"><path d="M1 1l8 8M9 1L1 9" strokeWidth="1.800" /></Drawing>
            </ViewTab>
          </ViewTabs>
          <SitePlan />
        </CanvasArea>
      </Workspace>
      <TypeDialog />
      <PointerMark width="20" height="28" viewBox="0 0 20 28" aria-hidden="true">
        <path d="M2.500 2v18l4-3.500 3.500 8 5-2.500-3.500-6.500 5-.5z" fill="#fff" stroke="#1f4e86" strokeWidth="2.600" strokeLinejoin="round" />
      </PointerMark>
      <Caption>Revit 2025. Warstwice w terenie - kurs.pl</Caption>
    </Page>
  );
}
